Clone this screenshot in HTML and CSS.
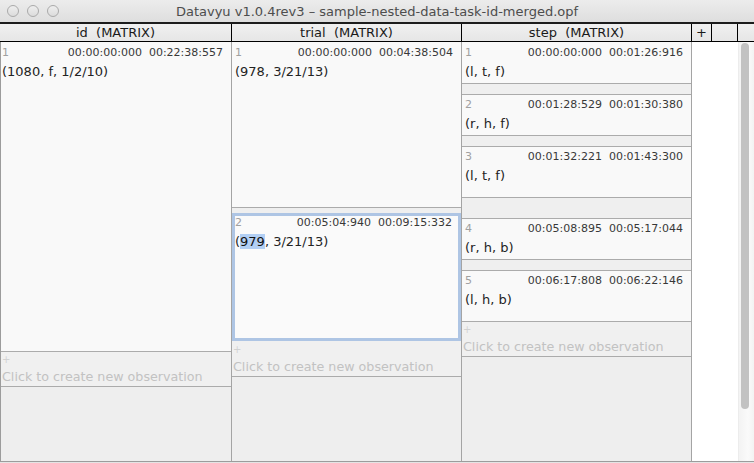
FILE: index.html
```html
<!DOCTYPE html>
<html>
<head>
<meta charset="utf-8">
<link rel="stylesheet" href="styles.css">
</head>
<body>
<div class="window">
  <div class="titlebar">
    <div class="lights"><span class="light"></span><span class="light"></span><span class="light"></span></div>
    <div class="title">Datavyu v1.0.4rev3 – sample-nested-data-task-id-merged.opf</div>
    <div></div>
  </div>
  <div class="header">
    <div class="hcell h1">id&nbsp;&nbsp;(MATRIX)</div>
    <div class="hcell h2 active">trial&nbsp;&nbsp;(MATRIX)</div>
    <div class="hcell h3">step&nbsp;&nbsp;(MATRIX)</div>
    <div class="hcell hplus">+</div>
    <div class="hcell hempty"></div>
    <div class="hcell hlast"></div>
  </div>
  <div class="main">
    <div class="col col1">
      <div class="cell" style="height:310px">
        <div class="meta"><span class="idx">1</span><span class="times"><span>00:00:00:000</span><span>00:22:38:557</span></span></div>
        <div class="val">(1080, f, 1/2/10)</div>
      </div>
      <div class="newobs" style="height:35px"><div class="plus">+</div><div class="newtext">Click to create new observation</div></div>
      <div class="filler"></div>
    </div>
    <div class="col col2">
      <div class="cell" style="height:166px">
        <div class="meta"><span class="idx">1</span><span class="times"><span>00:00:00:000</span><span>00:04:38:504</span></span></div>
        <div class="val">(978, 3/21/13)</div>
      </div>
      <div class="gap" style="height:5px"></div>
      <div class="cell selected" style="height:128px">
        <div class="meta"><span class="idx">2</span><span class="times"><span>00:05:04:940</span><span>00:09:15:332</span></span></div>
        <div class="val">(<span class="hl">979</span>, 3/21/13)</div>
      </div>
      <div class="newobs" style="height:36px"><div class="plus">+</div><div class="newtext">Click to create new observation</div></div>
      <div class="filler"></div>
    </div>
    <div class="col col3">
      <div class="cell" style="height:42px">
        <div class="meta"><span class="idx">1</span><span class="times"><span>00:00:00:000</span><span>00:01:26:916</span></span></div>
        <div class="val">(l, t, f)</div>
      </div>
      <div class="gap" style="height:10px"></div>
      <div class="cell top" style="height:42px">
        <div class="meta"><span class="idx">2</span><span class="times"><span>00:01:28:529</span><span>00:01:30:380</span></span></div>
        <div class="val">(r, h, f)</div>
      </div>
      <div class="gap" style="height:10px"></div>
      <div class="cell top" style="height:52px">
        <div class="meta"><span class="idx">3</span><span class="times"><span>00:01:32:221</span><span>00:01:43:300</span></span></div>
        <div class="val">(l, t, f)</div>
      </div>
      <div class="gap" style="height:20px"></div>
      <div class="cell top" style="height:42px">
        <div class="meta"><span class="idx">4</span><span class="times"><span>00:05:08:895</span><span>00:05:17:044</span></span></div>
        <div class="val">(r, h, b)</div>
      </div>
      <div class="gap" style="height:10px"></div>
      <div class="cell top" style="height:52px">
        <div class="meta"><span class="idx">5</span><span class="times"><span>00:06:17:808</span><span>00:06:22:146</span></span></div>
        <div class="val">(l, h, b)</div>
      </div>
      <div class="newobs" style="height:35px"><div class="plus">+</div><div class="newtext">Click to create new observation</div></div>
      <div class="filler"></div>
    </div>
    <div class="blank"></div>
    <div class="scroll"><div class="thumb"></div></div>
  </div>
</div>
</body>
</html>
```
FILE: styles.css
```css
* { box-sizing: border-box; margin: 0; padding: 0; }
html, body { width: 754px; height: 463px; overflow: hidden; }
body { font-family: "DejaVu Sans", "Liberation Sans", sans-serif; background: #e4e4e4; }

.window { width: 754px; height: 463px; display: flex; flex-direction: column; background: #e4e4e4; }

.titlebar {
  height: 22px;
  display: grid;
  grid-template-columns: 1fr auto 1fr;
  align-items: center;
  background: linear-gradient(#ececec, #dedede);
}
.lights { display: flex; gap: 8px; padding-left: 7px; }
.light {
  width: 12px; height: 12px; border-radius: 50%;
  border: 1px solid #aaaaaa;
  background: linear-gradient(#eeeeee, #dcdcdc);
}
.title { font-size: 13px; color: #4d4d4d; white-space: nowrap; }

.header {
  height: 20px;
  display: flex;
  border-top: 2px solid #1c1c1c;
  border-bottom: 1px solid #000;
  background: linear-gradient(#f0f0f0, #e6e6e6);
}
.hcell {
  border-right: 1px solid #000;
  font-size: 13px; line-height: 17px;
  text-align: center; color: #1a1a1a;
  white-space: nowrap;
}
.h1 { width: 232px; }
.h2 { width: 230px; }
.h3 { width: 230px; }
.hplus { width: 20px; }
.hempty { width: 26px; }
.hlast { width: 16px; border-right: none; }

.main {
  height: 420px;
  display: flex;
  border-bottom: 1px solid #9c9c9c;
}
.col { display: flex; flex-direction: column; border-right: 1px solid #a4a4a4; }
.col1 { width: 232px; border-left: 1px solid #9c9c9c; }
.col2 { width: 230px; }
.col3 { width: 230px; }

.cell {
  background: #f9f9f9;
  border-bottom: 1px solid #ababab;
  padding: 4px 8px 0 3px;
  flex: none;
}
.col1 .cell { padding-left: 1px; }
.cell.top { border-top: 1px solid #ababab; padding-top: 3px; }
.cell.selected { border: 3px solid #aec5e4; padding: 0 6px 0 0; background: #fafafa; }

.meta { display: flex; font-size: 11px; line-height: 14px; }
.idx { color: #a0a0a0; }
.times { margin-left: auto; display: flex; gap: 7px; color: #383838; }
.val { font-size: 13px; line-height: 18px; margin-top: 3px; color: #232323; white-space: nowrap; }
.hl { background: #b2cff4; color: #111; }

.gap { background: #efefef; flex: none; }

.newobs {
  flex: none;
  background: #f0f0f0;
  border-bottom: 1px solid #ababab;
  padding-left: 1px;
}
.col2 .newobs { padding-top: 1px; }
.plus { font-size: 10px; line-height: 12px; padding-top: 2px; height: 14px; color: #d2d2d2; }
.newtext { font-size: 12.7px; line-height: 16px; margin-top: 3px; color: #c2c2c2; white-space: nowrap; }

.filler { flex: 1; background: #eeeeee; }

.blank { width: 46px; background: #ffffff; }
.scroll {
  width: 16px;
  background: linear-gradient(90deg, #f3f3f3, #fafafa 60%, #f3f3f3);
  border-left: 1px solid #ececec;
  padding: 1px 0 0 2px;
}
.thumb { width: 8px; height: 366px; border-radius: 4px; background: #c2c2c2; }
```
